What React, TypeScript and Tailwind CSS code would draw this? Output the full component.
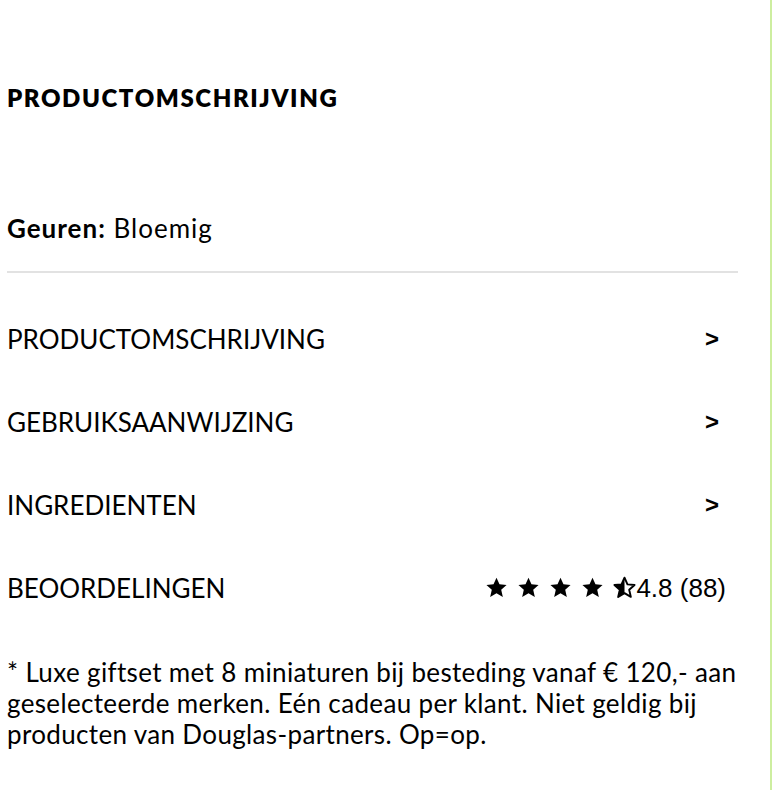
import React from "react";

const STAR = "M12 1.8l3.1 6.9 7.4.7-5.6 5 1.7 7.4L12 17.9l-6.6 3.9 1.7-7.4-5.6-5 7.4-.7z";

const Star = ({ half = false }: { half?: boolean }) => (
  <svg width="23" height="23" viewBox="0 0 24 24" className="shrink-0">
    <defs>
      <clipPath id="lefthalf">
        <rect x="0" y="0" width="12" height="24" />
      </clipPath>
    </defs>
    {half ? (
      <>
        <path d={STAR} fill="none" stroke="#000" strokeWidth="2" strokeLinejoin="round" />
        <path d={STAR} fill="#000" clipPath="url(#lefthalf)" />
      </>
    ) : (
      <path d={STAR} fill="#000" />
    )}
  </svg>
);

const Row = ({ label, right }: { label: string; right: React.ReactNode }) => (
  <div className="flex h-[83px] items-center justify-between">
    <span className="text-[26px] leading-none text-black">{label}</span>
    {right}
  </div>
);

const Chevron = () => (
  <span
    className="mr-[19px] text-[24px] font-bold leading-none text-black"
    style={{ fontFamily: '"Liberation Sans", Arial, sans-serif' }}
  >
    &gt;
  </span>
);

export default function App() {
  return (
    <div
      className="flex h-[790px] w-[774px] bg-white"
      style={{ fontFamily: 'Lato, "Open Sans", sans-serif' }}
    >
      <div className="w-[770px] pl-[7px] pr-[32px]">
        <h2 className="mt-[83px] text-[24px] font-extrabold leading-[30px] tracking-[1.6px] text-black">
          PRODUCTOMSCHRIJVING
        </h2>
        <div className="mt-[100px] text-[26px] leading-[30px] tracking-[1px] text-black">
          <span className="font-bold">Geuren:</span> Bloemig
        </div>
        <div className="mt-[28px] h-[2px] bg-[#e2e2e2]" />
        <div className="mt-[24px]">
          <Row label="PRODUCTOMSCHRIJVING" right={<Chevron />} />
          <Row label="GEBRUIKSAANWIJZING" right={<Chevron />} />
          <Row label="INGREDIENTEN" right={<Chevron />} />
          <Row
            label="BEOORDELINGEN"
            right={
              <div className="mr-[12px] flex items-center">
                <div className="flex items-center gap-[9px]">
                  <Star />
                  <Star />
                  <Star />
                  <Star />
                  <Star half />
                </div>
                <span
                  className="text-[26px] leading-none text-black"
                  style={{ fontFamily: '"Liberation Sans", Arial, sans-serif' }}
                >
                  4.8 (88)
                </span>
              </div>
            }
          />
        </div>
        <p className="-mr-[16px] mt-[28px] text-[26px] leading-[31px] tracking-[0.35px] text-black">
          * Luxe giftset met 8 miniaturen bij besteding vanaf € 120,- aan geselecteerde merken. Eén cadeau per klant. Niet geldig bij producten van Douglas-partners. Op=op.
        </p>
      </div>
      <div className="h-full w-[2px] bg-[#cdeea0]" />
      <div className="w-[2px]" />
    </div>
  );
}
